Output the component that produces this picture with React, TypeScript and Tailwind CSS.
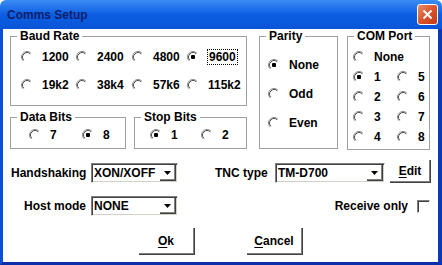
import React from "react";

function Radio({ checked }: { checked?: boolean }) {
  return (
    <svg width="12" height="12" viewBox="0 0 12 12" className="shrink-0">
      <path d="M9.89 2.11 A5.5 5.5 0 0 0 2.11 9.89" fill="none" stroke="#8a8a8a" />
      <path d="M9.18 2.82 A4.5 4.5 0 0 0 2.82 9.18" fill="none" stroke="#505050" />
      {checked && <rect x="4" y="4" width="4" height="4" rx="1" fill="#000" />}
    </svg>
  );
}

function Option({
  label,
  checked,
  focus,
  className = "",
}: {
  label: string;
  checked?: boolean;
  focus?: boolean;
  className?: string;
}) {
  return (
    <div className={`flex h-[14px] items-center gap-[9px] ${className}`}>
      <Radio checked={checked} />
      <span
        className={`leading-[14px] ${focus ? "outline outline-1 outline-dotted outline-black outline-offset-0 px-[1px]" : ""}`}
      >
        {label}
      </span>
    </div>
  );
}

function Group({
  title,
  className,
  children,
}: {
  title: string;
  className: string;
  children?: React.ReactNode;
}) {
  return (
    <div className={`relative border border-[#a0a0a0] ${className}`}>
      <span className="absolute -top-[8px] left-[6px] bg-white px-[3px] leading-[14px]">
        {title}
      </span>
      {children}
    </div>
  );
}

function Combo({ value, className }: { value: string; className: string }) {
  return (
    <div
      className={`flex h-[20px] items-stretch border border-t-[#808080] border-l-[#808080] border-b-white border-r-white shadow-[inset_1px_1px_0_#404040,inset_-1px_-1px_0_#d4d0c8] ${className}`}
    >
      <span className="flex-1 pl-[2px] pt-[2px] leading-[14px]">{value}</span>
      <div className="my-[1px] mr-[1px] flex w-[16px] items-center justify-center border-r border-b border-[#404040] shadow-[inset_-1px_-1px_0_#808080]">
        <svg width="7" height="4" viewBox="0 0 7 4">
          <path d="M0 0h7L3.5 4z" fill="#000" />
        </svg>
      </div>
    </div>
  );
}

function Button({
  hot,
  rest,
  className,
}: {
  hot: string;
  rest: string;
  className: string;
}) {
  return (
    <button
      className={`flex items-center justify-center border-r border-b border-[#404040] bg-white shadow-[inset_-1px_-1px_0_#808080] ${className}`}
    >
      <span className="underline underline-offset-2">{hot}</span>
      {rest}
    </button>
  );
}

export default function App() {
  return (
    <div className="h-[265px] w-[442px] font-['Liberation_Sans',Arial,sans-serif] text-[12px] font-bold text-black">
      {/* title bar */}
      <div className="flex h-[29px] items-center justify-between rounded-t-[6px] bg-gradient-to-b from-[#3a8cf5] via-[#0c5ee2] to-[#0a55d8] pl-[7px] pr-[4px]">
        <span className="text-[12px] text-[#0c1f6e]">Comms Setup</span>
        <div className="flex h-[21px] w-[21px] items-center justify-center rounded-[3px] border border-white bg-gradient-to-br from-[#ea8a68] via-[#d9542b] to-[#c23a12]">
          <svg width="11" height="11" viewBox="0 0 11 11">
            <path d="M1.5 1.5l8 8M9.5 1.5l-8 8" stroke="#fff" strokeWidth="2" />
          </svg>
        </div>
      </div>

      {/* body */}
      <div className="h-[236px] border-x-[3px] border-b-[3px] border-r-[4px] border-x-[#0b4fd9] border-b-[#0a2fa8] border-r-[#0a39b8] bg-white pl-[7px] pt-[7px]">
        <div className="flex items-start">
          <div className="flex w-[237px] flex-col">
            <Group title="Baud Rate" className="h-[70px] w-[237px]">
              <div className="grid grid-cols-[55px_56px_55px_56px] gap-y-[14px] pl-[10px] pt-[13px]">
                <Option label="1200" />
                <Option label="2400" />
                <Option label="4800" />
                <Option label="9600" checked focus />
                <Option label="19k2" />
                <Option label="38k4" />
                <Option label="57k6" />
                <Option label="115k2" />
              </div>
            </Group>
            <div className="mt-[11px] flex">
              <Group title="Data Bits" className="h-[32px] w-[116px]">
                <div className="flex pl-[18px] pt-[10px]">
                  <Option label="7" className="w-[53px]" />
                  <Option label="8" checked />
                </div>
              </Group>
              <Group title="Stop Bits" className="ml-[8px] h-[32px] w-[113px]">
                <div className="flex pl-[15px] pt-[10px]">
                  <Option label="1" checked className="w-[51px]" />
                  <Option label="2" />
                </div>
              </Group>
            </div>
          </div>

          <Group title="Parity" className="ml-[12px] h-[113px] w-[79px]">
            <div className="flex flex-col gap-[15px] pl-[8px] pt-[21px]">
              <Option label="None" checked />
              <Option label="Odd" />
              <Option label="Even" />
            </div>
          </Group>

          <Group title="COM Port" className="ml-[9px] h-[114px] w-[83px]">
            <div className="grid grid-cols-[44px_30px] gap-y-[6px] pl-[5px] pt-[13px]">
              <Option label="None" className="col-span-2" />
              <Option label="1" checked />
              <Option label="5" />
              <Option label="2" />
              <Option label="6" />
              <Option label="3" />
              <Option label="7" />
              <Option label="4" />
              <Option label="8" />
            </div>
          </Group>
        </div>

        {/* handshaking / tnc row */}
        <div className="mt-[10px] flex h-[23px] items-end">
          <span className="mb-[3px] w-[81px] pl-[1px] leading-[14px]">Handshaking</span>
          <Combo value="XON/XOFF" className="w-[87px]" />
          <span className="mb-[3px] ml-[37px] w-[60px] leading-[14px]">TNC type</span>
          <Combo value="TM-D700" className="w-[110px]" />
          <Button hot="E" rest="dit" className="ml-[5px] h-[23px] w-[41px]" />
        </div>

        {/* host mode row */}
        <div className="mt-[13px] flex h-[20px] items-center pr-[8px]">
          <span className="w-[81px] pr-[5px] text-right leading-[14px]">Host mode</span>
          <Combo value="NONE" className="w-[87px]" />
          <span className="ml-auto leading-[14px]">Receive only</span>
          <div className="ml-[9px] h-[13px] w-[13px] border border-t-[#808080] border-l-[#808080] border-b-white border-r-white shadow-[inset_1px_1px_0_#404040]" />
        </div>

        {/* buttons */}
        <div className="mt-[12px] flex justify-center gap-[52px] pr-[7px]">
          <Button hot="O" rest="k" className="h-[27px] w-[56px]" />
          <Button hot="C" rest="ancel" className="h-[27px] w-[56px]" />
        </div>
      </div>
    </div>
  );
}
